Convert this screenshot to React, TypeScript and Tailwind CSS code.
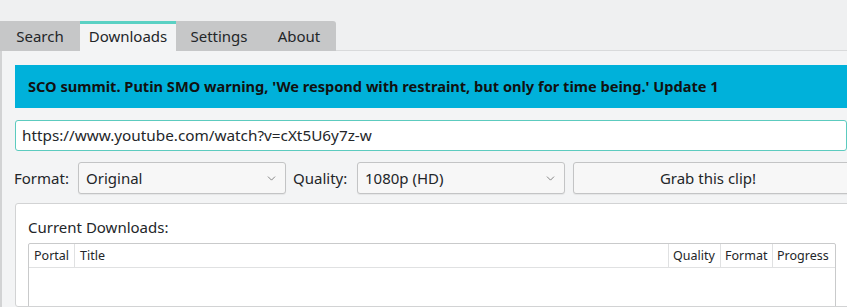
import { ChevronDown } from "lucide-react";

const tabs = ["Search", "Downloads", "Settings", "About"];

function Select({ value, width }: { value: string; width: string }) {
  return (
    <div
      className={`${width} h-[32px] shrink-0 flex items-center justify-between pl-[7px] pr-[7px] bg-[#f7f7f7] border border-[#c3c4c5] rounded-[3px] shadow-[0_1px_1px_rgba(0,0,0,0.06)]`}
    >
      <span>{value}</span>
      <ChevronDown className="w-[13px] h-[13px] text-[#555]" strokeWidth={1.3} />
    </div>
  );
}

export default function App() {
  return (
    <div
      className="w-[847px] h-[307px] overflow-hidden bg-[#eff0f1] text-[#232629] text-[15px]"
      style={{ fontFamily: '"Noto Sans", "DejaVu Sans", sans-serif' }}
    >
      {/* Tab bar */}
      <div className="pt-[21px] flex">
        <div className="flex bg-[#c6c7c8] rounded-tr-[3px] h-[30px]">
          {tabs.map((tab) =>
            tab === "Downloads" ? (
              <div
                key={tab}
                className="w-[96px] flex items-center justify-center bg-[#f3f4f5] border-t-[3px] border-[#5ad1c4] pb-[2px]"
              >
                {tab}
              </div>
            ) : (
              <div
                key={tab}
                className={`${tab === "Search" ? "w-[80px]" : tab === "Settings" ? "w-[86px]" : "w-[74px]"} flex items-center justify-center`}
              >
                {tab}
              </div>
            )
          )}
        </div>
        <div className="flex-1 border-b border-[#d9dadb]" />
      </div>

      {/* Pane */}
      <div className="h-[256px] bg-[#f3f4f5] border-l-2 border-[#d2d3d4] pl-[13px] pt-[14px] flex flex-col">
        <div className="shrink-0 h-[43px] bg-[#00b1da] flex items-center pl-[13px] font-bold text-[#111] text-[14.6px]">
          SCO summit. Putin SMO warning, 'We respond with restraint, but only for time being.' Update 1
        </div>

        <div className="shrink-0 mt-[12px] h-[31px] bg-white border border-[#5ccbbf] rounded-[3px] flex items-center pl-[6px] text-[15.3px]">
          https://www.youtube.com/watch?v=cXt5U6y7z-w
        </div>

        <div className="shrink-0 mt-[11px] flex items-center">
          <span className="w-[64px] -ml-[1px]">Format:</span>
          <Select value="Original" width="w-[208px]" />
          <span className="w-[71px] pl-[7px]">Quality:</span>
          <Select value="1080p (HD)" width="w-[208px]" />
          <div className="ml-[8px] flex-1 h-[32px] flex items-center justify-center bg-[#f7f7f7] border border-[#c3c4c5] rounded-[3px] mr-[-4px] pr-[8px] shadow-[0_1px_1px_rgba(0,0,0,0.06)]">
            Grab this clip!
          </div>
        </div>

        <div className="mt-[9px] flex-1 min-h-0 overflow-hidden bg-white border border-[#d2d3d4] rounded-[3px] mr-[-4px] pl-[12px] pt-[13px]">
          <div className="text-[15px] leading-[20px]">Current Downloads:</div>
          <div className="mt-[6px] w-[808px] h-[80px] border border-[#c9cacb] rounded-t-[2px] bg-white">
            <div className="flex h-[24px] border-b border-[#e0e1e2] text-[12.5px] leading-[24px]">
              <div className="w-[46px] pl-[5px] border-r border-[#e0e1e2]">Portal</div>
              <div className="w-[594px] pl-[5px] border-r border-[#e0e1e2]">Title</div>
              <div className="w-[52px] pl-[4px] border-r border-[#e0e1e2]">Quality</div>
              <div className="w-[52px] pl-[4px] border-r border-[#e0e1e2]">Format</div>
              <div className="flex-1 pl-[4px]">Progress</div>
            </div>
          </div>
        </div>
      </div>
    </div>
  );
}
